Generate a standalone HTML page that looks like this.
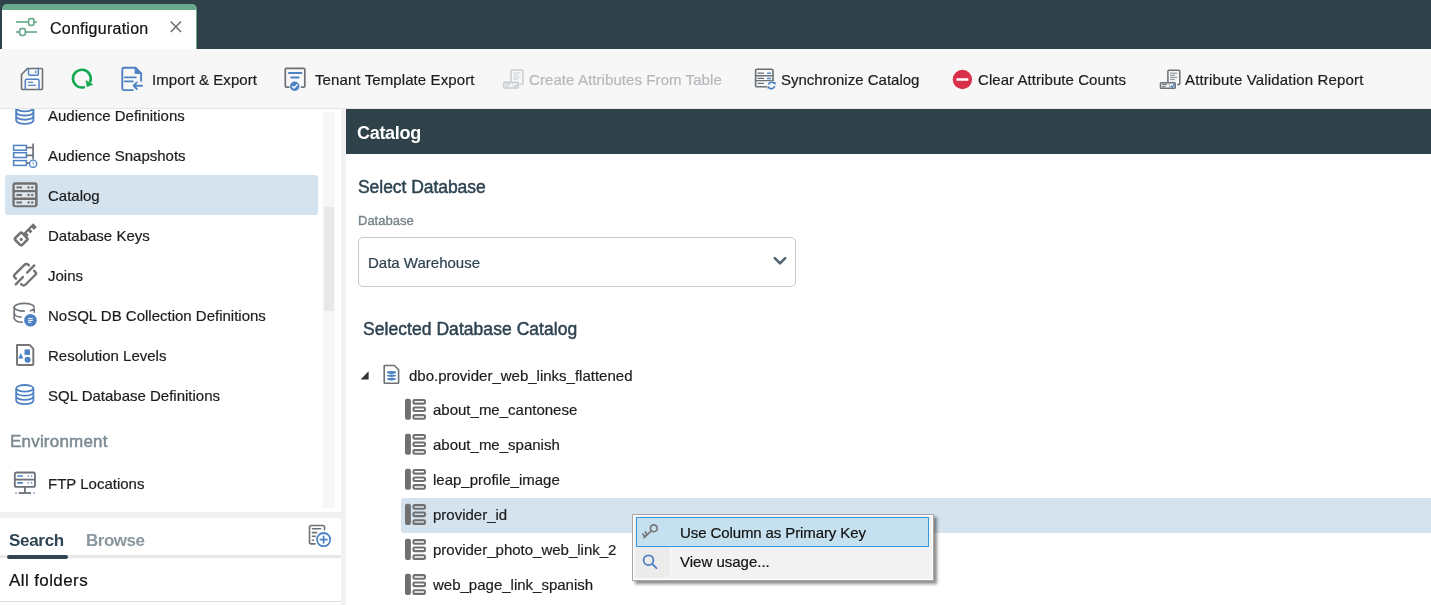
<!DOCTYPE html>
<html><head><meta charset="utf-8">
<style>
*{box-sizing:border-box;margin:0;padding:0}
html,body{width:1431px;height:605px;overflow:hidden;background:#fff;font-family:"Liberation Sans",sans-serif;color:#1c1c1c}
.a{position:absolute}
.t{position:absolute;white-space:nowrap;line-height:20px;font-size:15px;will-change:transform;-webkit-text-stroke:0.2px currentColor}
svg{position:absolute;overflow:visible}
</style></head><body>
<!-- top bar -->
<div class="a" style="left:0;top:0;width:1431px;height:49px;background:#2f424a"></div>
<div class="a" style="left:2px;top:4px;width:195px;height:45px;background:#6aaa8c;border-radius:5px 5px 0 0"></div>
<div class="a" style="left:2px;top:10px;width:194px;height:39px;background:#fff"></div>
<svg style="left:0;top:0" width="60" height="49">
 <g stroke="#6aaa8c" stroke-width="1.7" fill="none">
  <line x1="16" y1="22" x2="28.5" y2="22"/><line x1="34" y1="22" x2="37" y2="22"/>
  <rect x="28.6" y="18.7" width="5.4" height="6.6" rx="1.5"/>
  <line x1="16" y1="32" x2="19.5" y2="32"/><line x1="25.5" y1="32" x2="37" y2="32"/>
  <rect x="19.7" y="28.7" width="5.6" height="6.6" rx="1.5"/>
 </g>
</svg>
<div class="t" style="left:50px;top:19px;font-size:16px;color:#111;letter-spacing:0.25px">Configuration</div>
<svg style="left:0;top:0" width="200" height="49">
 <g stroke="#6a6a6a" stroke-width="1.5"><line x1="170.7" y1="21.5" x2="181" y2="32"/><line x1="181" y1="21.5" x2="170.7" y2="32"/></g>
</svg>

<!-- toolbar -->
<div class="a" style="left:0;top:49px;width:1431px;height:60px;background:#f7f7f7;border-bottom:1px solid #e4e4e4"></div>
<svg style="left:0;top:0" width="1431" height="605">
<!-- save -->
<g fill="none" stroke-linejoin="round">
 <path d="M27.5,68.5 H41.5 Q42.5,68.5 42.5,69.5 V88.5 Q42.5,89.5 41.5,89.5 H22.5 Q21.5,89.5 21.5,88.5 V74.5 Z" stroke="#6b7177" stroke-width="1.6"/>
 <path d="M28.5,68.5 V73.8 Q28.5,75.3 30,75.3 H36.8 Q38.3,75.3 38.3,73.8 V68.5" stroke="#4e82c3" stroke-width="1.5"/>
 <line x1="35.6" y1="70.8" x2="35.6" y2="73" stroke="#4e82c3" stroke-width="1.2"/>
 <path d="M25.3,89.5 V80.8 Q25.3,79.3 26.8,79.3 H37.5 Q39,79.3 39,80.8 V89.5" stroke="#4e82c3" stroke-width="1.5"/>
 <line x1="28" y1="82.3" x2="33" y2="82.3" stroke="#4e82c3" stroke-width="1.2"/>
 <line x1="28" y1="85.3" x2="36" y2="85.3" stroke="#4e82c3" stroke-width="1.2"/>
</g>
<!-- refresh -->
<path d="M83.9,87.3 A8.9,8.9 0 1 1 90.3,81.5" fill="none" stroke="#16a94f" stroke-width="2.6" stroke-linecap="round"/>
<path d="M86,80.5 L87.1,86.7 L92.7,84.5 Z" fill="#16a94f" stroke="#16a94f" stroke-width="0.6" stroke-linejoin="round"/>
<!-- import export -->
<g fill="none" stroke="#4e82c3" stroke-width="1.9" stroke-linejoin="round" stroke-linecap="round">
 <path d="M141.1,80.8 V73.4 L135.5,67.7 H123.8 Q122.3,67.7 122.3,69.2 V88.6 Q122.3,90.1 123.8,90.1 H132.9"/>
 <line x1="124.8" y1="77.4" x2="135.8" y2="77.4"/>
 <line x1="124.8" y1="81.4" x2="132.8" y2="81.4"/>
 <line x1="134.3" y1="85.7" x2="142" y2="85.7"/>
 <polyline points="136.8,82.4 133.6,85.7 136.8,89"/>
</g>
<path d="M134.6,67.2 L141.8,73.9 H135.6 Q134.6,73.9 134.6,72.9 Z" fill="#4e82c3"/>
<!-- tenant template -->
<g fill="none" stroke-linejoin="round" stroke-linecap="round">
 <path d="M288.8,87.2 H286.4 Q285.3,87.2 285.3,86.1 V69.4 Q285.3,68.3 286.4,68.3 H303.7 Q304.8,68.3 304.8,69.4 V86.1 Q304.8,87.2 303.7,87.2 H301.6" stroke="#6b7177" stroke-width="1.7"/>
 <line x1="289" y1="73.1" x2="301.3" y2="73.1" stroke="#4e82c3" stroke-width="2"/>
 <line x1="291.2" y1="77.4" x2="298.6" y2="77.4" stroke="#4e82c3" stroke-width="2"/>
</g>
<circle cx="294.7" cy="86.3" r="4.7" fill="#4e82c3"/>
<polyline points="292.4,86.4 294.1,88 297.1,84.7" fill="none" stroke="#fff" stroke-width="1.4" stroke-linecap="round" stroke-linejoin="round"/>
<!-- create attributes (disabled) -->
<g transform="translate(-656.8,-0.3)" fill="none" stroke-linejoin="round">
 <path d="M1167.9,82 V71.2 Q1167.9,70.3 1168.8,70.3 H1178.9 Q1179.8,70.3 1179.8,71.2 V83.7 Q1179.8,84.6 1178.9,84.6 H1177.2" stroke="#c8cdd2" stroke-width="1.5"/>
 <g stroke="#d6dadd" stroke-width="1.3"><line x1="1170" y1="73.2" x2="1177.3" y2="73.2"/><line x1="1170" y1="75.3" x2="1175" y2="75.3"/><line x1="1170" y1="77.4" x2="1177.3" y2="77.4"/><line x1="1170" y1="79.5" x2="1175" y2="79.5"/></g>
 <rect x="1160.5" y="82.7" width="14.7" height="5.6" rx="0.9" stroke="#c8cdd2" stroke-width="1.6"/>
 <g stroke="#c8cdd2" stroke-width="1.2"><line x1="1162.2" y1="84.5" x2="1167" y2="84.5"/><line x1="1162.2" y1="86.6" x2="1165.5" y2="86.6"/></g>
 <line x1="1169.4" y1="83.3" x2="1169.4" y2="87.8" stroke="#d6dadd" stroke-width="0.8"/>
 <polyline points="1170.8,85.8 1172.2,87.2 1174.4,84" stroke="#c8cdd2" stroke-width="1.4"/>
</g>
<!-- synchronize catalog -->
<g fill="none" stroke-linejoin="round" stroke-linecap="round">
 <path d="M767.6,86.8 H757 Q755.6,86.8 755.6,85.4 V70.6 Q755.6,69.3 757,69.3 H771.6 Q773,69.3 773,70.6 V80.4" stroke="#6b7177" stroke-width="1.6"/>
 <line x1="755.6" y1="75.7" x2="773" y2="75.7" stroke="#6b7177" stroke-width="1.4"/>
 <line x1="755.6" y1="80.6" x2="773" y2="80.6" stroke="#6b7177" stroke-width="1.4"/>
 <g stroke="#6b7177" stroke-width="1.3"><line x1="758" y1="73.2" x2="763.5" y2="73.2"/><line x1="758" y1="78.4" x2="763.5" y2="78.4"/><line x1="758" y1="83.3" x2="763.5" y2="83.3"/></g>
 <g stroke="#4e82c3" stroke-width="1.5"><line x1="767.6" y1="73.2" x2="770.3" y2="73.2"/><line x1="767.6" y1="78.4" x2="770.3" y2="78.4"/></g>
</g>
<circle cx="771.6" cy="85.4" r="4.6" fill="#f7f7f7"/>
<g fill="none" stroke="#4a7fc0" stroke-width="1.7">
 <path d="M768.6,84.6 A3.1,3.1 0 0 1 774.4,83.7"/>
 <path d="M774.6,86.2 A3.1,3.1 0 0 1 768.8,87.1"/>
</g>
<path d="M773,82 L775.8,82.2 L775.3,85.2 Z M770.2,88.8 L767.4,88.6 L767.9,85.6 Z" fill="#4a7fc0"/>
<!-- clear counts -->
<circle cx="962.4" cy="79.5" r="9.7" fill="#d9304a"/>
<rect x="956.4" y="78.2" width="12" height="2.6" rx="0.6" fill="#fff"/>
<!-- attribute validation -->
<g transform="translate(0,0)" fill="none" stroke-linejoin="round">
 <path d="M1167.9,82 V71.2 Q1167.9,70.3 1168.8,70.3 H1178.9 Q1179.8,70.3 1179.8,71.2 V83.7 Q1179.8,84.6 1178.9,84.6 H1177.2" stroke="#6b7177" stroke-width="1.5"/>
 <g stroke="#9aa0a6" stroke-width="1.3"><line x1="1170" y1="73.2" x2="1177.3" y2="73.2"/><line x1="1170" y1="75.3" x2="1175" y2="75.3"/><line x1="1170" y1="77.4" x2="1177.3" y2="77.4"/><line x1="1170" y1="79.5" x2="1175" y2="79.5"/></g>
 <rect x="1160.5" y="82.7" width="14.7" height="5.6" rx="0.9" stroke="#6b7177" stroke-width="1.6"/>
 <g stroke="#6b7177" stroke-width="1.2"><line x1="1162.2" y1="84.5" x2="1167" y2="84.5"/><line x1="1162.2" y1="86.6" x2="1165.5" y2="86.6"/></g>
 <line x1="1169.4" y1="83.3" x2="1169.4" y2="87.8" stroke="#9aa0a6" stroke-width="0.8"/>
 <polyline points="1170.8,85.8 1172.2,87.2 1174.4,84" stroke="#4e82c3" stroke-width="1.4"/>
</g>
</svg>
<div class="t" style="left:152px;top:70px;letter-spacing:0.05px">Import &amp; Export</div>
<div class="t" style="left:315px;top:70px;letter-spacing:0.1px">Tenant Template Export</div>
<div class="t" style="left:529px;top:70px;letter-spacing:0.08px;color:#b4b8bc">Create Attributes From Table</div>
<div class="t" style="left:781px;top:70px">Synchronize Catalog</div>
<div class="t" style="left:978px;top:70px;letter-spacing:0.06px">Clear Attribute Counts</div>
<div class="t" style="left:1185px;top:70px;letter-spacing:0.17px">Attribute Validation Report</div>


<!-- sidebar -->
<div class="a" style="left:341px;top:109px;width:5px;height:496px;background:#f2f2f2"></div>
<div class="a" style="left:323px;top:112px;width:12px;height:396px;background:#f6f6f6"></div>
<div class="a" style="left:324px;top:207px;width:10px;height:104px;background:#e8e8e8"></div>
<div class="a" style="left:5px;top:175px;width:313px;height:40px;background:#d5e3ee;border-radius:3px"></div>
<div class="a" style="left:0;top:109px;width:323px;height:403px;overflow:hidden">
<div class="t" style="left:48px;top:-3px">Audience Definitions</div>
</div>
<div class="t" style="left:48px;top:146px">Audience Snapshots</div>
<div class="t" style="left:48px;top:186px">Catalog</div>
<div class="t" style="left:48px;top:226px">Database Keys</div>
<div class="t" style="left:48px;top:266px">Joins</div>
<div class="t" style="left:48px;top:306px">NoSQL DB Collection Definitions</div>
<div class="t" style="left:48px;top:346px">Resolution Levels</div>
<div class="t" style="left:48px;top:386px">SQL Database Definitions</div>
<div class="t" style="left:10px;top:432px;font-size:17px;color:#7d8a92;-webkit-text-stroke:0.5px #7d8a92;letter-spacing:0.2px">Environment</div>
<div class="t" style="left:48px;top:474px">FTP Locations</div>
<svg style="left:0;top:0" width="350" height="605">
<!-- audience definitions (clipped) -->
<clipPath id="cl1"><rect x="0" y="109" width="320" height="400"/></clipPath>
<g clip-path="url(#cl1)" fill="none" stroke="#4e82c3" stroke-width="1.9">
 <ellipse cx="24.8" cy="108.1" rx="8.6" ry="3.3"/>
 <path d="M16.2,108.1 V120.6 A8.6,3.3 0 0 0 33.4,120.6 V108.1"/>
 <path d="M16.2,112.2 A8.6,3.3 0 0 0 33.4,112.2 M16.2,116.4 A8.6,3.3 0 0 0 33.4,116.4"/>
</g>
<!-- audience snapshots -->
<g fill="none" stroke-width="1.5">
 <rect x="13.6" y="145.4" width="12.8" height="4.8" stroke="#4e82c3"/>
 <rect x="13.6" y="152.7" width="12.8" height="4.8" stroke="#4e82c3"/>
 <rect x="13.6" y="160.6" width="12.8" height="4.8" stroke="#4e82c3"/>
 <line x1="33.1" y1="143.5" x2="33.1" y2="159.3" stroke="#6b7177" stroke-width="1.7"/>
 <line x1="26.4" y1="147.6" x2="33.1" y2="147.6" stroke="#6b7177" stroke-width="1.7"/>
 <line x1="26.4" y1="155.4" x2="33.1" y2="155.4" stroke="#6b7177" stroke-width="1.7"/>
 <line x1="26.4" y1="163" x2="29" y2="163" stroke="#6b7177" stroke-width="1.7"/>
 <circle cx="33.1" cy="163.7" r="3.6" stroke="#4e82c3" stroke-width="1.4"/>
 <polyline points="33.1,161.9 33.1,163.9 34.2,164.8" stroke="#4e82c3" stroke-width="0.9"/>
</g>
<!-- catalog -->
<rect x="12.4" y="182.2" width="25.2" height="25" rx="3" fill="#707070"/>
<rect x="14.7" y="184.7" width="20.4" height="5.4" rx="0.5" fill="#dfe7ee"/>
<rect x="14.7" y="192.3" width="20.4" height="5.3" rx="0.5" fill="#dfe7ee"/>
<rect x="14.7" y="199.9" width="20.4" height="5.3" rx="0.5" fill="#dfe7ee"/>
<g stroke="#707070" stroke-width="2">
 <line x1="16.4" y1="187.4" x2="22" y2="187.4"/><line x1="16.4" y1="195" x2="22" y2="195"/><line x1="16.4" y1="202.5" x2="22" y2="202.5"/>
</g>
<g fill="#707070">
 <circle cx="28.6" cy="187.4" r="1.2"/><circle cx="32.2" cy="187.4" r="1.2"/>
 <circle cx="28.6" cy="195" r="1.2"/><circle cx="32.2" cy="195" r="1.2"/>
 <circle cx="28.6" cy="202.5" r="1.2"/><circle cx="32.2" cy="202.5" r="1.2"/>
</g>
<!-- database keys -->
<g transform="translate(21.2,239) rotate(-45)">
 <rect x="-4.9" y="-4.9" width="9.8" height="9.8" rx="1.8" fill="none" stroke="#737373" stroke-width="2.6"/>
 <circle cx="-0.3" cy="0.3" r="1.6" fill="#737373"/>
 <path d="M5.8,-2.6 H19.6 V2.5 H15.4 V-0.4 H13.3 V2.5 H10.4 V-0.4 H8.3 V2.5 H5.8 Z" fill="#737373"/>
</g>
<!-- joins -->
<g fill="none" stroke="#737373" stroke-width="2.4" stroke-linecap="round" stroke-linejoin="round">
 <path d="M16,278.7 L14.4,277.1 Q13.4,276 14.4,274.9 L24.4,264.9 Q26.4,262.9 28.4,264.9 L28.9,265.4"/>
 <path d="M27.1,272.6 L34.3,265.4"/>
 <path d="M15.7,284.3 L22.9,277.1"/>
 <path d="M34.1,270.8 L35.6,272.3 Q36.7,273.4 35.6,274.5 L25.6,284.5 Q23.6,286.5 21.6,284.5 L21.1,284"/>
</g>
<!-- nosql -->
<g fill="none" stroke="#6f757a" stroke-width="1.6" stroke-linecap="round">
 <path d="M14.2,307.2 A10,3.8 0 0 1 34.2,307.2"/>
 <path d="M14.2,307.2 A10,3.8 0 0 0 24.4,311.1"/>
 <path d="M30.4,310.7 Q33.6,309.9 34.2,308.4 V312.2"/>
 <path d="M14.2,307.2 V318.2"/>
 <path d="M14.2,313 Q14.8,316.8 20.9,317.1"/>
 <path d="M14.2,318.2 Q14.8,322.2 22.3,322.3"/>
</g>
<circle cx="30.45" cy="320.3" r="6.3" fill="#4e82c3"/>
<g stroke="#fff" stroke-width="1"><line x1="28.1" y1="318.6" x2="32.8" y2="318.6"/><line x1="28.1" y1="320.4" x2="32.8" y2="320.4"/><line x1="28.1" y1="322.3" x2="31.3" y2="322.3"/></g>
<!-- resolution levels -->
<path d="M17,344.9 H29.5 L33.3,348.7 V364 Q33.3,364.9 32.4,364.9 H17.9 Q17,364.9 17,364 Z" fill="none" stroke="#777" stroke-width="2" stroke-linejoin="round"/>
<rect x="24.5" y="349.4" width="5.5" height="5.5" fill="#4e82c3"/>
<path d="M20.8,353 L23.4,358.5 H18.2 Z" fill="#4e82c3"/>
<circle cx="27.6" cy="359.8" r="3" fill="#4e82c3"/>
<!-- sql db -->
<g fill="none" stroke="#4e82c3" stroke-width="1.8">
 <ellipse cx="24.8" cy="388.3" rx="8.6" ry="3.3"/>
 <path d="M16.2,388.3 V400.8 A8.6,3.3 0 0 0 33.4,400.8 V388.3"/>
 <path d="M16.2,392.4 A8.6,3.3 0 0 0 33.4,392.4 M16.2,396.6 A8.6,3.3 0 0 0 33.4,396.6"/>
</g>
<!-- ftp -->
<g fill="none" stroke="#6b7177" stroke-width="1.8">
 <rect x="14.8" y="472.5" width="20.2" height="14.4" rx="2"/>
 <line x1="14.8" y1="479.6" x2="35" y2="479.6"/>
 <line x1="24.9" y1="487" x2="24.9" y2="492.5"/>
 <line x1="18.7" y1="493" x2="31" y2="493"/>
</g>
<g stroke="#4e82c3" stroke-width="1.6" stroke-linecap="round">
 <line x1="17.8" y1="476" x2="22.4" y2="476"/><line x1="17.8" y1="482.9" x2="22.4" y2="482.9"/>
 <line x1="28.2" y1="476" x2="28.2" y2="476.1"/><line x1="31.6" y1="476" x2="31.6" y2="476.1"/>
 <line x1="28.2" y1="482.9" x2="28.2" y2="483"/><line x1="31.6" y1="482.9" x2="31.6" y2="483"/>
 <line x1="15.9" y1="493" x2="16" y2="493"/><line x1="34" y1="493" x2="34.1" y2="493"/>
</g>
<!-- add doc -->
<g fill="none" stroke="#6b7177" stroke-width="1.6" stroke-linecap="round">
 <path d="M315,543.9 H311.3 Q309.5,543.9 309.5,542.1 V527.3 Q309.5,525.5 311.3,525.5 H322.7 Q324.5,525.5 324.5,527.3 V529.8"/>
 <line x1="312.4" y1="528.7" x2="320.6" y2="528.7"/>
 <line x1="312.4" y1="532.6" x2="316.5" y2="532.6"/>
 <line x1="312.4" y1="536.3" x2="315.2" y2="536.3"/>
 <line x1="312.4" y1="540.2" x2="313.5" y2="540.2"/>
</g>
<circle cx="323.6" cy="539.6" r="6.6" fill="#fff" stroke="#4e82c3" stroke-width="1.8"/>
<g stroke="#4e82c3" stroke-width="1.8"><line x1="319.6" y1="539.6" x2="327.6" y2="539.6"/><line x1="323.6" y1="535.6" x2="323.6" y2="543.6"/></g>
</svg>

<div class="a" style="left:0;top:512px;width:341px;height:6px;background:#f0f0f0"></div>
<div class="a" style="left:0;top:555px;width:341px;height:3px;background:#e8e8e8"></div>
<div class="a" style="left:7px;top:555px;width:61px;height:4px;background:#2f4553;border-radius:2px"></div>
<div class="t" style="left:9px;top:531px;font-size:17px;font-weight:bold;color:#2f4553;letter-spacing:-0.3px;-webkit-text-stroke:0">Search</div>
<div class="t" style="left:86px;top:531px;font-size:17px;font-weight:bold;color:#8a969d;letter-spacing:-0.5px;-webkit-text-stroke:0">Browse</div>
<div class="t" style="left:9px;top:571px;font-size:17px;color:#111;letter-spacing:0.4px">All folders</div>
<div class="a" style="left:0;top:601px;width:341px;height:1px;background:#dcdcdc"></div>

<!-- main -->
<div class="a" style="left:346px;top:109px;width:1085px;height:45px;background:#2f424a"></div>
<div class="t" style="left:357px;top:123px;font-size:18px;font-weight:bold;color:#fff;letter-spacing:-0.3px;-webkit-text-stroke:0">Catalog</div>
<div class="t" style="left:358px;top:177px;font-size:17.5px;color:#2d4250;-webkit-text-stroke:0.45px #2d4250;letter-spacing:-0.05px">Select Database</div>
<div class="t" style="left:358px;top:211px;font-size:13px;color:#76838b;-webkit-text-stroke:0.35px #76838b">Database</div>
<div class="a" style="left:358px;top:237px;width:438px;height:50px;border:1px solid #c9c9c9;border-radius:5px"></div>
<div class="t" style="left:368px;top:253px;color:#2d4250">Data Warehouse</div>
<svg style="left:0;top:0" width="800" height="300"><polyline points="774.8,258.2 780,263.4 785.2,258.2" fill="none" stroke="#4f646e" stroke-width="2.6" stroke-linecap="round" stroke-linejoin="round"/></svg>
<div class="t" style="left:363px;top:319px;font-size:17.5px;color:#2d4250;-webkit-text-stroke:0.45px #2d4250;letter-spacing:0.05px">Selected Database Catalog</div>
<div class="a" style="left:401px;top:498px;width:1030px;height:35px;background:#d5e3ee;border-radius:3px 0 0 3px"></div>
<svg style="left:0;top:0" width="1431" height="605">
 <path d="M360.6,379.4 L368.6,371.3 V379.4 Z" fill="#333"/>
 <path d="M384.2,365.5 H394.4 L398.6,369.7 V382.6 Q398.6,383.3 397.9,383.3 H384.9 Q384.2,383.3 384.2,382.6 Z" fill="none" stroke="#6b7177" stroke-width="1.6" stroke-linejoin="round"/>
 <g fill="#4e82c3">
  <ellipse cx="391.5" cy="372.5" rx="4.6" ry="1.4"/>
  <path d="M386.9,375.2 Q391.5,373.6 396.1,375.2 V375.9 Q391.5,378.2 386.9,375.9 Z"/>
  <path d="M386.9,378.5 Q391.5,376.9 396.1,378.5 V379.2 Q391.5,381.6 386.9,379.2 Z"/>
 </g>

 <g transform="translate(404.8,398.8)">
   <rect x="0.2" y="-0.1" width="5.9" height="21.1" rx="2" fill="#707070"/>
   <g fill="none" stroke="#707070" stroke-width="2.1">
    <rect x="8.65" y="1.25" width="11.5" height="3.6" rx="1.2"/>
    <rect x="8.65" y="8.65" width="11.5" height="3.6" rx="1.2"/>
    <rect x="8.65" y="16.35" width="11.5" height="3.6" rx="1.2"/>
   </g>
  </g>
 <g transform="translate(404.8,433.8)">
   <rect x="0.2" y="-0.1" width="5.9" height="21.1" rx="2" fill="#707070"/>
   <g fill="none" stroke="#707070" stroke-width="2.1">
    <rect x="8.65" y="1.25" width="11.5" height="3.6" rx="1.2"/>
    <rect x="8.65" y="8.65" width="11.5" height="3.6" rx="1.2"/>
    <rect x="8.65" y="16.35" width="11.5" height="3.6" rx="1.2"/>
   </g>
  </g>
 <g transform="translate(404.8,468.8)">
   <rect x="0.2" y="-0.1" width="5.9" height="21.1" rx="2" fill="#707070"/>
   <g fill="none" stroke="#707070" stroke-width="2.1">
    <rect x="8.65" y="1.25" width="11.5" height="3.6" rx="1.2"/>
    <rect x="8.65" y="8.65" width="11.5" height="3.6" rx="1.2"/>
    <rect x="8.65" y="16.35" width="11.5" height="3.6" rx="1.2"/>
   </g>
  </g>
 <g transform="translate(404.8,503.9)">
   <rect x="0.2" y="-0.1" width="5.9" height="21.1" rx="2" fill="#707070"/>
   <g fill="none" stroke="#707070" stroke-width="2.1">
    <rect x="8.65" y="1.25" width="11.5" height="3.6" rx="1.2"/>
    <rect x="8.65" y="8.65" width="11.5" height="3.6" rx="1.2"/>
    <rect x="8.65" y="16.35" width="11.5" height="3.6" rx="1.2"/>
   </g>
  </g>
 <g transform="translate(404.8,538.9)">
   <rect x="0.2" y="-0.1" width="5.9" height="21.1" rx="2" fill="#707070"/>
   <g fill="none" stroke="#707070" stroke-width="2.1">
    <rect x="8.65" y="1.25" width="11.5" height="3.6" rx="1.2"/>
    <rect x="8.65" y="8.65" width="11.5" height="3.6" rx="1.2"/>
    <rect x="8.65" y="16.35" width="11.5" height="3.6" rx="1.2"/>
   </g>
  </g>
 <g transform="translate(404.8,573.9)">
   <rect x="0.2" y="-0.1" width="5.9" height="21.1" rx="2" fill="#707070"/>
   <g fill="none" stroke="#707070" stroke-width="2.1">
    <rect x="8.65" y="1.25" width="11.5" height="3.6" rx="1.2"/>
    <rect x="8.65" y="8.65" width="11.5" height="3.6" rx="1.2"/>
    <rect x="8.65" y="16.35" width="11.5" height="3.6" rx="1.2"/>
   </g>
  </g>
</svg>
<div class="t" style="left:409px;top:366px">dbo.provider_web_links_flattened</div>
<div class="t" style="left:433px;top:400px">about_me_cantonese</div>
<div class="t" style="left:433px;top:435px">about_me_spanish</div>
<div class="t" style="left:433px;top:470px">leap_profile_image</div>
<div class="t" style="left:433px;top:505px">provider_id</div>
<div class="t" style="left:433px;top:540px">provider_photo_web_link_2</div>
<div class="t" style="left:433px;top:575px">web_page_link_spanish</div>

<!-- context menu -->
<div class="a" style="left:632px;top:514px;width:302px;height:67px;background:#f2f2f2;border:1px solid #a6a6a6;box-shadow:inset 0 0 0 1px #fff,3px 3px 3px rgba(0,0,0,0.45)"></div>
<div class="a" style="left:636px;top:517px;width:34px;height:60px;background:#ebebeb"></div>
<div class="a" style="left:670px;top:517px;width:1px;height:60px;background:#fafafa"></div>
<div class="a" style="left:636px;top:517px;width:293px;height:30px;background:#c5e1f0;border:1px solid #3399dd"></div>
<svg style="left:0;top:0" width="1431" height="605">
 <g fill="none" stroke="#777" stroke-width="1.7" stroke-linecap="round">
  <circle cx="653.8" cy="528.3" r="3.4"/>
  <line x1="651.3" y1="530.8" x2="644" y2="537.6"/>
  <line x1="644.8" y1="536.7" x2="642.9" y2="534"/>
  <line x1="646.8" y1="534.8" x2="645.5" y2="531.8"/>
 </g>
 <g fill="none" stroke="#4a7fc0" stroke-width="1.8" stroke-linecap="round">
  <circle cx="648.5" cy="560.2" r="4.9"/>
  <line x1="652.2" y1="563.9" x2="656.5" y2="568.2"/>
 </g>
</svg>
<div class="t" style="left:680px;top:523px;color:#111;letter-spacing:-0.1px">Use Column as Primary Key</div>
<div class="t" style="left:680px;top:552px;color:#111">View usage...</div>

</body></html>
